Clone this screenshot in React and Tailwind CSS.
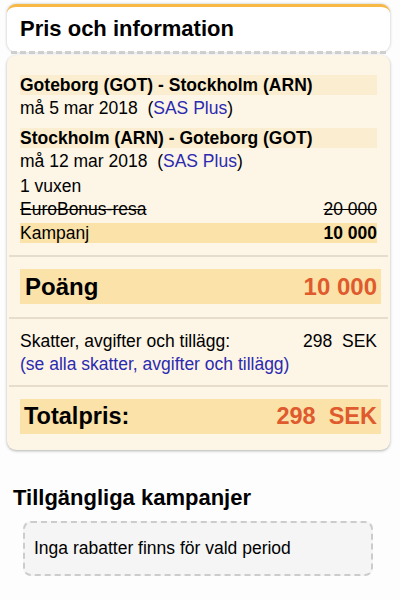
export default function App() {
  return (
    <div className="w-[400px] h-[600px] bg-[#fdfdfd] text-black" style={{ fontFamily: '"Liberation Sans", Arial, sans-serif' }}>
      <div className="pl-[7px] pr-[10px] pt-[4px]">
        <div className="h-[48px] rounded-[9px] border-t-[3px] border-[#f7b844] bg-white shadow-[0_0_3px_rgba(0,0,0,0.25)] flex items-center px-[13px] pb-[2px]">
          <span className="text-[22px] font-bold leading-none">Pris och information</span>
        </div>
        <div className="mx-[4px] border-t-[3px] border-dashed border-[#cfcfcf] mt-[-1px]"></div>
        <div className="mt-[1px] rounded-[9px] bg-[#fdf5e6] shadow-[0_1px_3px_rgba(0,0,0,0.3)] pt-[20px] pb-[16px]">
          <div className="px-[13px] text-[17.5px] leading-[20px]">
            <div className="bg-[#fbeed0] font-bold">Goteborg (GOT) - Stockholm (ARN)</div>
            <div className="mt-[3px]">må 5 mar 2018&nbsp;&nbsp;(<span className="text-[#2b2bb0]">SAS Plus</span>)</div>
            <div className="bg-[#fbeed0] font-bold mt-[10px]">Stockholm (ARN) - Goteborg (GOT)</div>
            <div className="mt-[3px]">må 12 mar 2018&nbsp;&nbsp;(<span className="text-[#2b2bb0]">SAS Plus</span>)</div>
            <div className="mt-[5px]">1 vuxen</div>
            <div className="mt-[3px] flex justify-between line-through">
              <span>EuroBonus-resa</span>
              <span>20 000</span>
            </div>
            <div className="mt-[4px] bg-[#fbe2a9] flex justify-between">
              <span>Kampanj</span>
              <span className="font-bold">10 000</span>
            </div>
          </div>
          <div className="mx-[2px] mt-[12px] border-t-2 border-[#e6ddcc]"></div>
          <div className="px-[9px] pl-[13px] pt-[12px] pb-[13px]">
            <div className="h-[35px] bg-[#fbe2a9] flex items-center justify-between pl-[5px] pr-[4px] text-[24px] font-bold">
              <span>Poäng</span>
              <span className="text-[#df5a2c]">10 000</span>
            </div>
          </div>
          <div className="mx-[2px] border-t-2 border-[#e6ddcc]"></div>
          <div className="px-[13px] pt-[11px] pb-[9px] text-[17.5px] leading-[23px]">
            <div className="flex justify-between">
              <span>Skatter, avgifter och tillägg:</span>
              <span>298&nbsp;&nbsp;SEK</span>
            </div>
            <div className="text-[#2b2bb0]">(se alla skatter, avgifter och tillägg)</div>
          </div>
          <div className="mx-[2px] border-t-2 border-[#e6ddcc]"></div>
          <div className="pl-[13px] pr-[9px] pt-[12px]">
            <div className="h-[35px] bg-[#fbe2a9] flex items-center justify-between pl-[4px] pr-[4px] text-[23.5px] font-bold">
              <span>Totalpris:</span>
              <span className="text-[#df5a2c]">298&nbsp;&nbsp;SEK</span>
            </div>
          </div>
        </div>
      </div>
      <div className="px-[13px] mt-[35px] text-[22px] font-bold leading-[26px]">Tillgängliga kampanjer</div>
      <div className="ml-[23px] mr-[27px] mt-[10px] h-[55px] rounded-[8px] border-2 border-dashed border-[#cccccc] bg-[#f5f5f5] flex items-center px-[9px] text-[17.5px]">
        Inga rabatter finns för vald period
      </div>
    </div>
  );
}
